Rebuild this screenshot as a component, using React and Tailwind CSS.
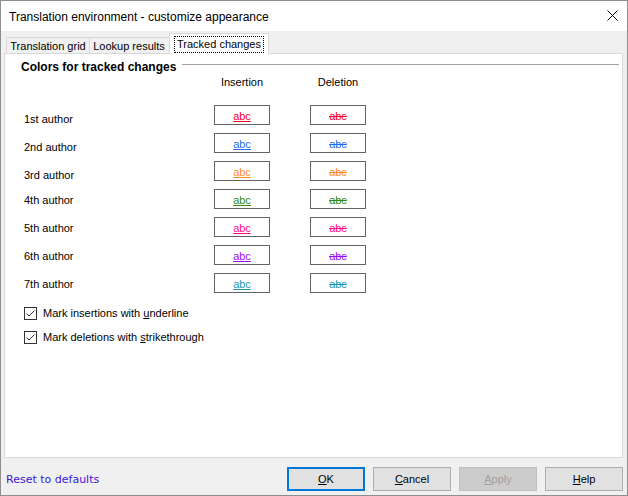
import React from "react";

const authors = [
  { label: "1st author", color: "#f5001e", offset: "mt-[7px]" },
  { label: "2nd author", color: "#1c6ef2", offset: "mt-[7px]" },
  { label: "3rd author", color: "#ff8c1a", offset: "mt-[7px]" },
  { label: "4th author", color: "#2e8b0f", offset: "mt-[4px]" },
  { label: "5th author", color: "#ff0a84", offset: "mt-[4px]" },
  { label: "6th author", color: "#9b0af5", offset: "mt-[4px]" },
  { label: "7th author", color: "#1a98b4", offset: "mt-[4px]" },
];

const Check = ({ children }) => (
  <div className="flex items-center h-[24px]">
    <div className="w-[13px] h-[13px] border border-[#333333] bg-white flex items-center justify-center">
      <svg width="11" height="11" viewBox="0 0 11 11">
        <path d="M1.5 5.5 L4 8 L9.5 2.5" fill="none" stroke="#333333" strokeWidth="1" />
      </svg>
    </div>
    <span className="ml-[6px]">{children}</span>
  </div>
);

const Button = ({ children, variant }) => {
  const cls =
    variant === "default"
      ? "border-2 border-[#0078d7] bg-[#e1e1e1] text-black"
      : variant === "disabled"
      ? "border border-[#bfbfbf] bg-[#cccccc] text-[#a0a0a0]"
      : "border border-[#adadad] bg-[#e1e1e1] text-black";
  return (
    <div className={`w-[78px] h-[24px] flex items-center justify-center ${cls}`}>
      {children}
    </div>
  );
};

export default function App() {
  return (
    <div
      className="w-[628px] h-[496px] border border-[#8e8e8e] flex flex-col text-[11px] leading-[14px] text-black overflow-hidden"
      style={{ fontFamily: '"Liberation Sans", Arial, sans-serif' }}
    >
      {/* Title bar */}
      <div className="h-[30px] bg-white flex items-center justify-between pl-[8px] pr-[9px]">
        <span className="text-[12px] pt-[1px]">Translation environment - customize appearance</span>
        <svg width="11" height="11" viewBox="0 0 11 11" className="mb-[2px]">
          <path d="M0.5 0.5 L10.5 10.5 M10.5 0.5 L0.5 10.5" stroke="#000" strokeWidth="1" />
        </svg>
      </div>

      {/* Body */}
      <div className="flex-1 bg-[#f0f0f0] flex flex-col pl-[3px] pr-[4px]">
        {/* Tabs */}
        <div className="h-[22px] flex items-end pl-[2px] whitespace-nowrap">
          <div className="w-[84px] h-[16px] border-t border-l border-r border-[#d9d9d9] flex items-center justify-center pt-[1px]">
            Translation grid
          </div>
          <div className="w-[81px] h-[16px] -ml-px border-t border-r border-[#d9d9d9] flex items-center justify-center pt-[1px]">
            Lookup results
          </div>
          <div className="w-[100px] h-[21px] -ml-px -mb-px relative z-10 bg-white border-t border-l border-r border-[#d9d9d9] flex items-start justify-center pt-[2px]">
            <span className="border border-dotted border-black px-[2px] leading-[15px]">Tracked changes</span>
          </div>
        </div>

        {/* Panel */}
        <div className="h-[405px] bg-white border border-[#d9d9d9] flex flex-col">
          <div className="flex items-start pt-[6px] pl-[16px] pr-[3px]">
            <span className="font-bold text-[12px]">Colors for tracked changes</span>
            <div className="flex-1 h-px bg-[#a0a0a0] ml-[6px] mt-[4px]" />
          </div>

          <div className="flex pl-[19px] mt-[1px]">
            <div className="w-[190px]" />
            <div className="w-[56px] text-center">Insertion</div>
            <div className="w-[40px]" />
            <div className="w-[56px] text-center">Deletion</div>
          </div>

          <div className="flex flex-col pl-[19px] mt-[16px]">
            {authors.map((a) => (
              <div key={a.label} className="flex items-start h-[28px]">
                <div className={`w-[190px] ${a.offset}`}>{a.label}</div>
                <div
                  className="w-[56px] h-[20px] border border-[#646464] flex items-center justify-center pt-[2px] underline"
                  style={{ color: a.color }}
                >
                  abc
                </div>
                <div className="w-[40px]" />
                <div
                  className="w-[56px] h-[20px] border border-[#646464] flex items-center justify-center pt-[2px] line-through"
                  style={{ color: a.color }}
                >
                  abc
                </div>
              </div>
            ))}
          </div>

          <div className="flex flex-col pl-[19px]">
            <Check>
              Mark insertions with <span className="underline">u</span>nderline
            </Check>
            <Check>
              Mark deletions with <span className="underline">s</span>trikethrough
            </Check>
          </div>
        </div>

        {/* Bottom */}
        <div className="flex items-start justify-between pt-[9px] pl-[2px]">
          <span
            className="text-[#3a17d4] text-[11px] mt-[6px]"
            style={{ fontFamily: '"DejaVu Sans", Verdana, sans-serif' }}
          >
            Reset to defaults
          </span>
          <div className="flex gap-[8px]">
            <Button variant="default">
              <span className="underline">O</span>K
            </Button>
            <Button>
              <span className="underline">C</span>ancel
            </Button>
            <Button variant="disabled">
              <span className="underline">A</span>pply
            </Button>
            <Button>
              <span className="underline">H</span>elp
            </Button>
          </div>
        </div>
      </div>
    </div>
  );
}
